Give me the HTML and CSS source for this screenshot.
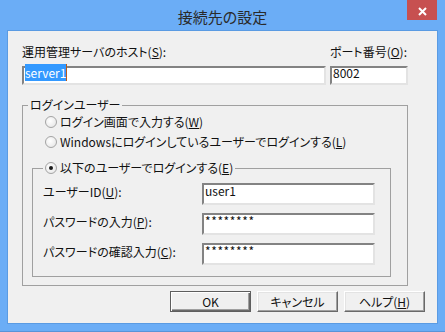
FILE: index.html
```html
<!doctype html>
<html>
<head>
	<meta charset="UTF-8" />
	<title>接続先の設定</title>
	<link rel="stylesheet" href="styles.css">
</head>
<body>

	<div class="window">
		<div class="titleBar">
			<span class="title">接続先の設定</span>
			<span class="closeBox">
				<svg width="30" height="20" viewBox="0 0 30 20">
					<path d="M12 8 L19 15 M19 8 L12 15" stroke="#fff" stroke-width="2" fill="none" />
				</svg>
			</span>
		</div>

		<div class="client">
			<div class="hostRow">
				<label class="lbl">運用管理サーバのホスト(<u>S</u>):</label>
				<label class="lbl">ポート番号(<u>O</u>):</label>
				<div class="field hostField"><span class="selected">server1</span></div>
				<div class="field hostField">8002</div>
			</div>

			<fieldset class="group">
				<legend class="groupHead">ログインユーザー</legend>
				<div class="radioRow"><span class="radio"></span>ログイン画面で入力する(<u>W</u>)</div>
				<div class="radioRow"><span class="radio"></span>Windowsにログインしているユーザーでログインする(<u>L</u>)</div>

				<fieldset class="subGroup">
					<legend class="radioRow subHead"><span class="radio checked"></span>以下のユーザーでログインする(<u>E</u>)</legend>
					<div class="userGrid">
						<label class="lbl">ユーザーID(<u>U</u>):</label>
						<div class="field userField">user1</div>
						<label class="lbl">パスワードの入力(<u>P</u>):</label>
						<div class="field userField pwd">********</div>
						<label class="lbl">パスワードの確認入力(<u>C</u>):</label>
						<div class="field userField pwd">********</div>
					</div>
				</fieldset>
			</fieldset>

			<div class="buttonRow">
				<button class="btn btnDefault">OK</button>
				<button class="btn">キャンセル</button>
				<button class="btn">ヘルプ(<u>H</u>)</button>
			</div>
		</div>
	</div>

</body>
</html>
```

FILE: styles.css
```css
body {
	margin: 0;
	font-family: "Noto Sans CJK JP", "Liberation Sans", sans-serif;
	font-size: 12px;
	font-feature-settings: "palt";
	color: #111;
}
.window {
	width: 445px;
	height: 332px;
	box-sizing: border-box;
	background: #6badf6;
	padding: 0px 7px 8px 7px;
	border-bottom: 1px solid #5a94d8;
}
.titleBar {
	height: 30px;
	display: grid;
	grid-template-columns: 1fr auto 1fr;
	grid-template-rows: 30px;
}
.title {
	grid-column: 2;
	font-size: 15px;
	line-height: 30px;
	margin-top: 2px;
	color: #2a2a2a;
}
.closeBox {
	grid-column: 3;
	justify-self: end;
	align-self: start;
	width: 30px;
	height: 20px;
	margin-right: 1px;
	background: #c75050;
}
.closeBox svg {
	display: block;
}
.client {
	height: 294px;
	box-sizing: border-box;
	background: #f0f0f0;
	border: 1px solid #5a9be3;
	padding: 14px 12px 0px 14px;
}
.lbl {
	line-height: 14px;
	white-space: nowrap;
}
.hostRow {
	display: grid;
	grid-template-columns: 304px 78px;
	grid-template-rows: 14px 19px;
	column-gap: 4px;
	row-gap: 7px;
}
.field {
	box-sizing: border-box;
	background: #fff;
	border: 2px solid;
	border-color: #838383 #e3e3e3 #e3e3e3 #838383;
	padding: 0px 1px;
	line-height: 10px;
	white-space: nowrap;
}
.hostField {
	height: 19px;
}
.userField {
	height: 22px;
	padding-top: 1px;
}
.pwd {
	letter-spacing: 0.6px;
}
.selected {
	background: #3399ff;
	color: #fff;
	border-right: 1px solid #b85a1a;
}
.group {
	width: 386px;
	box-sizing: border-box;
	margin: 13px 0px 0px 0px;
	padding: 3px 16px 8px 9px;
	border: 1px solid #a0a0a0;
}
.groupHead {
	padding: 0px 2px;
	margin-left: -4px;
	line-height: 14px;
}
.radioRow {
	display: flex;
	align-items: center;
	height: 14px;
	line-height: 14px;
	padding-left: 13px;
	white-space: nowrap;
}
.radioRow + .radioRow {
	margin-top: 6px;
}
.radio {
	width: 12px;
	height: 12px;
	box-sizing: border-box;
	border-radius: 50%;
	border: 1px solid #a4a4a4;
	background: radial-gradient(circle at 40% 40%, #fff, #e2e2e2);
	margin-right: 3px;
	display: grid;
	place-items: center;
}
.radio.checked::after {
	content: "";
	width: 4px;
	height: 4px;
	border-radius: 50%;
	background: #1a1a1a;
}
.subGroup {
	width: 359px;
	box-sizing: border-box;
	margin: 12px 0px 0px 0px;
	padding: 8px 15px 11px 10px;
	border: 1px solid #a0a0a0;
}
.subHead {
	padding: 0px 2px;
	height: 14px;
}
.userGrid {
	display: grid;
	grid-template-columns: 159px 173px;
	grid-template-rows: 22px 22px 22px;
	row-gap: 8px;
}
.userGrid .lbl {
	padding-top: 2px;
}
.buttonRow {
	display: flex;
	justify-content: flex-end;
	gap: 6px;
	margin-top: 5px;
}
.btn {
	width: 81px;
	height: 21px;
	box-sizing: border-box;
	padding: 0px;
	font: inherit;
	color: #111;
	background: #f0f0f0;
	border: 1px solid;
	border-color: #fff #696969 #696969 #fff;
	box-shadow: inset -1px -1px 0px #a0a0a0, inset 1px 1px 0px #e3e3e3;
}
.btnDefault {
	border-color: #5e5e5e;
	box-shadow: inset 1px 1px 0px #fff, inset -1px -1px 0px #696969, inset -2px -2px 0px #a0a0a0;
}
```
